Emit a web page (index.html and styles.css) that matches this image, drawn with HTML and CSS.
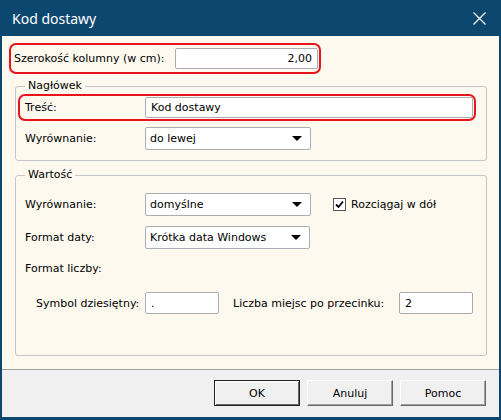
FILE: index.html
```html
<!DOCTYPE html>
<html lang="pl">

<head>
    <meta charset="UTF-8">
    <title>Kod dostawy</title>
    <link rel="stylesheet" href="styles.css">
</head>

<body>
    <div class="window">
        <div class="titlebar">
            <span class="title">Kod dostawy</span>
            <svg class="close" width="13" height="13" viewBox="0 0 13 13">
                <path d="M0.5 0.5 L12.5 12.5 M12.5 0.5 L0.5 12.5" stroke="#fff" stroke-width="1.2" />
            </svg>
        </div>

        <div class="content">
            <div class="hl hl-width">
                <span class="lbl lbl-width">Szerokość kolumny (w cm):</span>
                <div class="field field-num">2,00</div>
            </div>

            <fieldset class="group">
                <legend>Nagłówek</legend>
                <div class="hl hl-text">
                    <span class="lbl">Treść:</span>
                    <div class="field field-wide">Kod dostawy</div>
                </div>
                <div class="row">
                    <span class="lbl">Wyrównanie:</span>
                    <div class="select">do lewej<span class="arrow"></span></div>
                </div>
            </fieldset>

            <fieldset class="group group-value">
                <legend>Wartość</legend>
                <div class="row row-first">
                    <span class="lbl">Wyrównanie:</span>
                    <div class="select">domyślne<span class="arrow"></span></div>
                    <span class="check"><svg width="9" height="9" viewBox="0 0 9 9"><path d="M1 4.5 L3.5 7 L8 1.5" fill="none" stroke="#000" stroke-width="1.8" /></svg></span>
                    <span class="check-label">Rozciągaj w dół</span>
                </div>
                <div class="row row-date">
                    <span class="lbl">Format daty:</span>
                    <div class="select select-date">Krótka data Windows<span class="arrow"></span></div>
                </div>
                <div class="subtitle">Format liczby:</div>
                <div class="row row-number">
                    <span class="lbl lbl-small">Symbol dziesiętny:</span>
                    <div class="field field-small">.</div>
                    <span class="lbl lbl-places">Liczba miejsc po przecinku:</span>
                    <div class="field field-small">2</div>
                </div>
            </fieldset>
        </div>

        <div class="footer">
            <button type="button" class="btn btn-default">OK</button>
            <button type="button" class="btn">Anuluj</button>
            <button type="button" class="btn">Pomoc</button>
        </div>
    </div>
</body>

</html>
```

FILE: styles.css
```css
body {
    margin: 0;
    font-family: "DejaVu Sans", sans-serif;
    font-size: 11px;
    color: #000;
}

.window {
    width: 501px;
    height: 420px;
    box-sizing: border-box;
    border: 2px solid #0c4770;
    border-top: 0;
    border-bottom-width: 3px;
    display: flex;
    flex-direction: column;
    background-color: #fdf9ef;
}

.titlebar {
    height: 36px;
    flex-shrink: 0;
    background-color: #0c4770;
    color: #fff;
    display: flex;
    align-items: center;
    justify-content: space-between;
    padding: 0 13px 0 10px;
    font-family: "Noto Sans", sans-serif;
    font-size: 14px;
}

.content {
    flex: 1;
    display: flex;
    flex-direction: column;
    padding: 7px 12px 13px 7px;
}

/* czerwone obramowanie */
.hl {
    display: flex;
    align-items: center;
    box-sizing: border-box;
    border: 2px solid #e8141c;
    border-radius: 7px;
}

.hl-width {
    width: 312px;
    height: 31px;
    padding-left: 3px;
}

.lbl {
    width: 120px;
    flex-shrink: 0;
}

.lbl-width {
    width: 161px;
}

.field {
    height: 21px;
    box-sizing: border-box;
    background-color: #fff;
    border: 1px solid #abadb3;
    border-radius: 2px;
    padding: 0 5px;
    display: flex;
    align-items: center;
}

.field-num {
    width: 143px;
    justify-content: flex-end;
}

.group {
    margin: 5px 0 0 6px;
    padding: 0 0 10px;
    border: 1px solid #c6c6c6;
    border-radius: 3px;
    min-width: 0;
}

.group legend {
    margin-left: 9px;
    padding: 0 3px;
    line-height: 14px;
}

.hl-text {
    height: 27px;
    margin: 1px 10px 0 2px;
    padding-left: 5px;
}

.field-wide {
    width: 328px;
}

.row {
    display: flex;
    align-items: center;
    padding-left: 9px;
    margin-top: 6px;
}

.select {
    width: 166px;
    height: 23px;
    box-sizing: border-box;
    background-color: #fff;
    border: 1px solid #abadb3;
    border-radius: 2px;
    padding: 0 8px 0 4px;
    display: flex;
    align-items: center;
    justify-content: space-between;
}

.select-date {
    width: 165px;
}

.arrow {
    width: 0;
    height: 0;
    border-left: 5px solid transparent;
    border-right: 5px solid transparent;
    border-top: 5px solid #000;
}

.group-value {
    flex: 1;
    margin-top: 7px;
}

.row-first {
    margin-top: 11px;
}

.row-date {
    margin-top: 10px;
}

.check {
    width: 13px;
    height: 13px;
    box-sizing: border-box;
    margin-left: 22px;
    border: 1px solid #555;
    background-color: #fff;
    display: flex;
    align-items: center;
    justify-content: center;
}

.check-label {
    margin-left: 5px;
}

.subtitle {
    margin-top: 13px;
    padding-left: 9px;
    line-height: 14px;
}

.row-number {
    margin-top: 16px;
    padding-left: 20px;
}

.lbl-small {
    width: 109px;
}

.lbl-places {
    width: 166px;
    margin-left: 14px;
}

.field-small {
    width: 74px;
    height: 22px;
}

.footer {
    height: 48px;
    flex-shrink: 0;
    box-sizing: border-box;
    background-color: #f0f0f0;
    border-top: 1px solid #a0a0a0;
    display: flex;
    justify-content: flex-end;
    gap: 7px;
    padding: 10px 13px 0 0;
}

.btn {
    width: 86px;
    height: 26px;
    box-sizing: border-box;
    background-color: #f0f0f0;
    border: 1px solid;
    border-color: #fff #696969 #696969 #fff;
    box-shadow: inset -1px -1px #a0a0a0;
    font-family: "DejaVu Sans", sans-serif;
    font-size: 11px;
    color: #000;
    padding: 0;
}

.btn-default {
    border: 1px solid #222;
    box-shadow: inset 1px 1px #fff, inset -1px -1px #696969;
}
```
